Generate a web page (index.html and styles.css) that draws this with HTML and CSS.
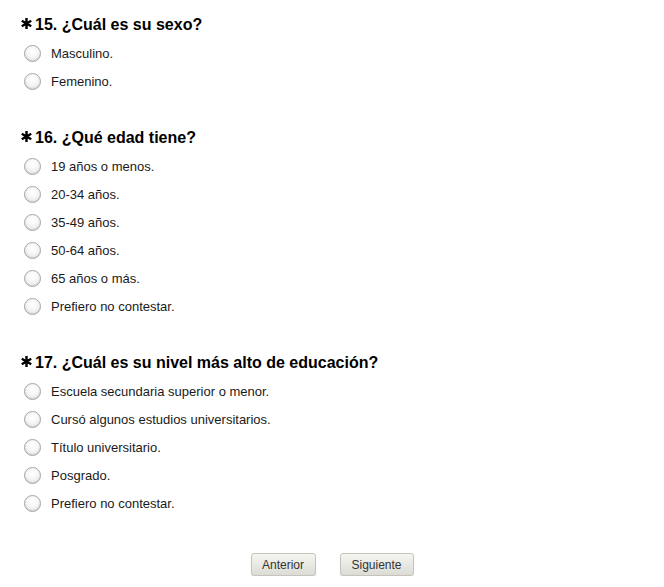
FILE: index.html
```html
<!DOCTYPE html>
<html lang="es">
<head>
    <meta charset="UTF-8">
    <title>Encuesta</title>
    <link rel="stylesheet" href="styles.css">
</head>
<body>
    <div class="survey">
        <div class="question">
            <h2 class="title">
                <svg class="req" viewBox="0 0 10 10" width="11" height="11"><path d="M5 0V10M0.7 2.5L9.3 7.5M0.7 7.5L9.3 2.5"/></svg>
                15. ¿Cuál es su sexo?
            </h2>
            <label class="option"><span class="radio"></span>Masculino.</label>
            <label class="option"><span class="radio"></span>Femenino.</label>
        </div>

        <div class="question">
            <h2 class="title">
                <svg class="req" viewBox="0 0 10 10" width="11" height="11"><path d="M5 0V10M0.7 2.5L9.3 7.5M0.7 7.5L9.3 2.5"/></svg>
                16. ¿Qué edad tiene?
            </h2>
            <label class="option"><span class="radio"></span>19 años o menos.</label>
            <label class="option"><span class="radio"></span>20-34 años.</label>
            <label class="option"><span class="radio"></span>35-49 años.</label>
            <label class="option"><span class="radio"></span>50-64 años.</label>
            <label class="option"><span class="radio"></span>65 años o más.</label>
            <label class="option"><span class="radio"></span>Prefiero no contestar.</label>
        </div>

        <div class="question">
            <h2 class="title">
                <svg class="req" viewBox="0 0 10 10" width="11" height="11"><path d="M5 0V10M0.7 2.5L9.3 7.5M0.7 7.5L9.3 2.5"/></svg>
                17. ¿Cuál es su nivel más alto de educación?
            </h2>
            <label class="option"><span class="radio"></span>Escuela secundaria superior o menor.</label>
            <label class="option"><span class="radio"></span>Cursó algunos estudios universitarios.</label>
            <label class="option"><span class="radio"></span>Título universitario.</label>
            <label class="option"><span class="radio"></span>Posgrado.</label>
            <label class="option"><span class="radio"></span>Prefiero no contestar.</label>
        </div>

        <div class="nav">
            <button class="btn">Anterior</button>
            <button class="btn btn-next">Siguiente</button>
        </div>
    </div>
</body>
</html>
```

FILE: styles.css
```css
body {
    margin: 0;
    background: #fff;
    color: #000;
    font-family: "Liberation Sans", Arial, sans-serif;
}
.survey {
    padding: 13px 0 0 21px;
}
.question {
    margin-bottom: 31px;
}
.title {
    display: flex;
    align-items: center;
    gap: 3px;
    margin: 0 0 4px;
    padding-top: 2px;
    font-size: 16px;
    font-weight: bold;
    line-height: 20px;
    height: 20px;
}
.req {
    width: 11px;
    height: 11px;
    margin-top: -3px;
    stroke: #000;
    stroke-width: 2.2;
    fill: none;
}
.option {
    display: flex;
    align-items: center;
    height: 28px;
    font-size: 13px;
    color: #1a1a1a;
}
.radio {
    width: 15px;
    height: 15px;
    margin: 0 10px 0 3px;
    border: 1px solid #a5a5a5;
    border-radius: 50%;
    background: radial-gradient(circle at 50% 35%, #ffffff 0%, #f6f6f6 45%, #dcdcdc 100%);
    box-shadow: inset 0 -1px 1px rgba(0, 0, 0, 0.08);
}
.nav {
    display: flex;
    justify-content: center;
    gap: 24px;
    margin-top: 36px;
    padding-right: 21px;
}
.btn {
    height: 23px;
    padding: 0 10px;
    min-width: 65px;
    font-family: "Liberation Sans", Arial, sans-serif;
    font-size: 12px;
    color: #333;
    background: linear-gradient(#f6f6f2, #dcdcd5);
    border: 1px solid #c4c4bc;
    border-radius: 3px;
    box-shadow: 0 1px 1px rgba(0, 0, 0, 0.12);
}
.btn-next {
    min-width: 74px;
}
```
